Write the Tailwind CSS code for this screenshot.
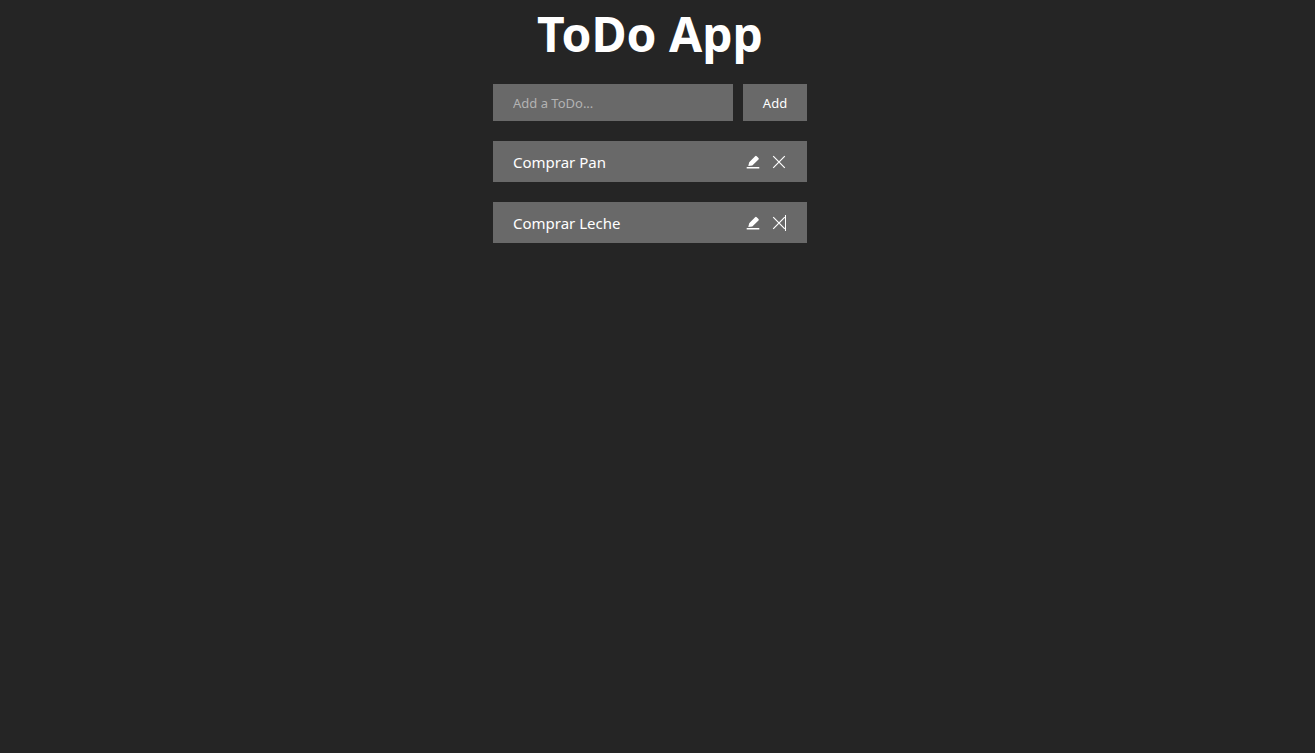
<!DOCTYPE html>
<html lang="es">
<head>
<meta charset="utf-8">
<meta name="viewport" content="width=device-width, initial-scale=1">
<title>ToDo App</title>
<script src="https://cdn.jsdelivr.net/npm/@tailwindcss/browser@4"></script>
</head>
<body class="min-h-screen bg-[#252525] pr-[15px] font-['Noto_Sans',sans-serif] text-white">
<main class="mx-auto flex w-full max-w-[314px] flex-col gap-5">
  <h1 class="pt-1 text-center text-[48px] leading-[60px] font-bold whitespace-nowrap">ToDo App</h1>
  <form class="flex gap-2.5">
    <input type="text" aria-label="Add a ToDo" placeholder="Add a ToDo..." class="h-[37px] min-w-0 flex-1 bg-[#696969] px-5 text-[13px] outline-none placeholder:text-[#b3b3b3]">
    <button type="button" class="h-[37px] w-16 bg-[#696969] pt-0.5 text-center text-[13px]">Add</button>
  </form>
  <ul class="flex flex-col gap-5">
    <li class="flex items-center justify-between bg-[#696969] px-5">
      <span class="pt-[11px] pb-[9px] text-[15px] leading-[21px]">Comprar Pan</span>
      <div class="flex gap-2.5">
        <button type="button" aria-label="Edit Comprar Pan">
          <svg class="size-4" viewBox="0 0 16 16" fill="currentColor" aria-hidden="true"><path d="M1.700 13h12.600v1.500H1.700zM3.300 12l.9-3.800L10.100 2.200q.8-.7 1.600 0l1.800 1.800q.7.8 0 1.600L7.300 11.500z"/></svg>
        </button>
        <button type="button" aria-label="Delete Comprar Pan">
          <svg class="size-4" viewBox="0 0 16 16" fill="none" stroke="currentColor" stroke-width="1.2" aria-hidden="true"><path d="M2.200 2.200l11.600 11.600M13.800 2.200L2.200 13.800"/></svg>
        </button>
      </div>
    </li>
    <li class="flex items-center justify-between bg-[#696969] px-5">
      <span class="pt-[11px] pb-[9px] text-[15px] leading-[21px]">Comprar Leche</span>
      <div class="flex gap-2.5">
        <button type="button" aria-label="Edit Comprar Leche">
          <svg class="size-4" viewBox="0 0 16 16" fill="currentColor" aria-hidden="true"><path d="M1.700 13h12.600v1.500H1.700zM3.300 12l.9-3.800L10.100 2.200q.8-.7 1.600 0l1.800 1.800q.7.8 0 1.600L7.300 11.500z"/></svg>
        </button>
        <button type="button" aria-label="Delete Comprar Leche" class="relative">
          <svg class="size-4" viewBox="0 0 16 16" fill="none" stroke="currentColor" stroke-width="1.2" aria-hidden="true"><path d="M2.200 2.200l11.600 11.600M13.800 2.200L2.200 13.800"/></svg>
          <span class="absolute inset-y-0 right-px w-px bg-white"></span>
        </button>
      </div>
    </li>
  </ul>
</main>
</body>
</html>
